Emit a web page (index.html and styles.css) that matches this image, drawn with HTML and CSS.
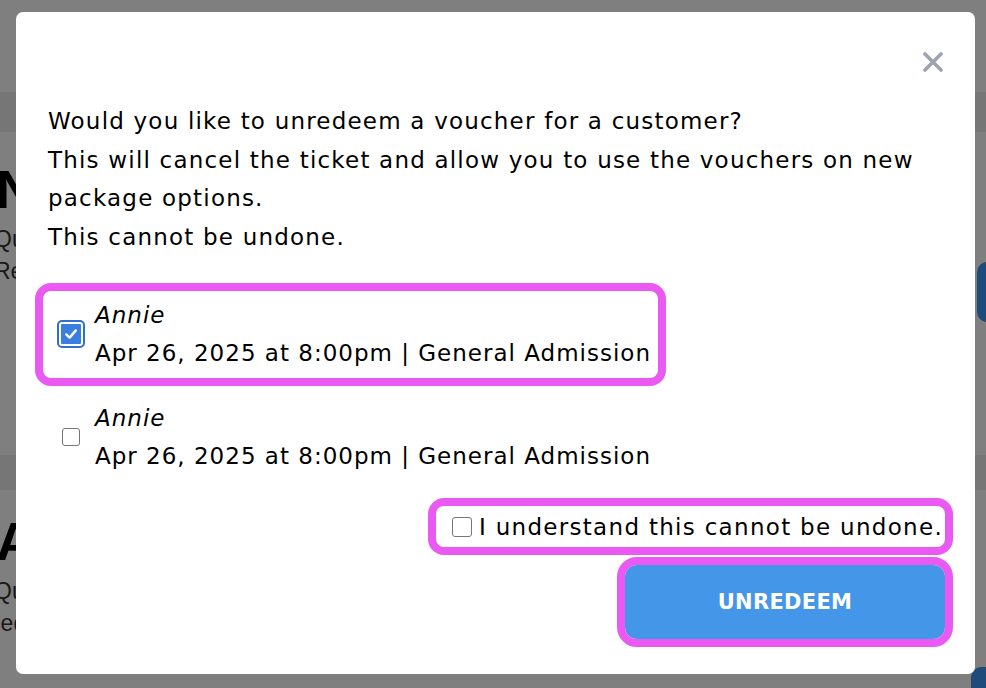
FILE: index.html
```html
<!DOCTYPE html>
<html lang="en">
<head>
    <meta charset="UTF-8">
    <meta name="viewport" content="width=device-width, initial-scale=1.0">
    <title>Unredeem Voucher</title>
    <link rel="stylesheet" href="styles.css">
</head>
<body>
    <div class="page">
        <div class="topbar"></div>
        <div class="card card-first">
            <div class="card-info">
                <h2>Nashville</h2>
                <p>Quantity: 2</p>
                <p>Redeemed: 2</p>
            </div>
            <div class="card-btn btn-one"></div>
        </div>
        <div class="card card-second">
            <div class="card-info">
                <h2>Annie</h2>
                <p>Quantity: 2</p>
                <p class="shift">Redeemed: 1</p>
            </div>
            <div class="card-btn btn-two"></div>
        </div>
    </div>

    <div class="overlay">
        <div class="modal">
            <div class="modal-head">
                <button class="close-btn" aria-label="Close">
                    <svg width="20" height="20" viewBox="0 0 20 20">
                        <path d="M2 2 L18 18 M18 2 L2 18" stroke="#9ca3af" stroke-width="3.6" stroke-linecap="round" fill="none"/>
                    </svg>
                </button>
            </div>

            <p class="intro">
                Would you like to unredeem a voucher for a customer?<br>
                This will cancel the ticket and allow you to use the vouchers on new package options.<br>
                This cannot be undone.
            </p>

            <div class="tickets">
                <label class="ticket focused">
                    <span class="check-wrap"><span class="check checked">
                        <svg width="16" height="16" viewBox="0 0 16 16"><path d="M3.2 8.4 L6.6 11.6 L12.8 4.4" stroke="#fff" stroke-width="2.4" fill="none" stroke-linecap="round" stroke-linejoin="round"/></svg>
                    </span></span>
                    <span class="ticket-text">
                        <em>Annie</em><br>
                        Apr 26, 2025 at 8:00pm | General Admission
                    </span>
                </label>
                <label class="ticket">
                    <span class="check-wrap"><span class="check"></span></span>
                    <span class="ticket-text">
                        <em>Annie</em><br>
                        Apr 26, 2025 at 8:00pm | General Admission
                    </span>
                </label>
            </div>

            <div class="confirm-row">
                <label class="confirm focused">
                    <span class="check small"></span>
                    I understand this cannot be undone.
                </label>
            </div>

            <div class="actions">
                <button class="unredeem focused">UNREDEEM</button>
            </div>
        </div>
    </div>
</body>
</html>
```

FILE: styles.css
```css
body { margin: 0; overflow: hidden; font-family: "DejaVu Sans", sans-serif; color: #000; background: #fff; }

.page { width: 1060px; margin-left: -4px; background: #ececec; }
.topbar { height: 92px; background: #fff; margin-bottom: 40px; }
.card { display: flex; background: #fff; padding: 0 20px 0 0; }
.card-first { height: 323px; margin-bottom: 35px; }
.card-second { height: 220px; }
.card-info { white-space: nowrap; }
.card-info h2 { font-family: "Liberation Sans", sans-serif; font-size: 54px; font-weight: bold; margin: 26px 0 0; line-height: 62px; }
.card-second .card-info h2 { margin-top: 20px; }
.card-info p { font-family: "Liberation Sans", sans-serif; font-size: 23px; color: #333; margin: 6px 0 0 -2px; line-height: 26px; }
.card-info p.shift { margin-left: -12px; }
.card-btn { margin-left: auto; background: #3e96f4; border-radius: 10px; height: 60px; }
.btn-one { width: 59px; margin-top: 130px; }
.btn-two { width: 65px; margin-top: 177px; }

.overlay { position: fixed; inset: 0; background: rgba(0, 0, 0, 0.5); }
.modal { width: 897px; margin: 12px 0 0 16px; padding: 40px 30px 35px 32px; background: #fff; border-radius: 7px; }

.modal-head { display: flex; justify-content: flex-end; height: 20px; }
.close-btn { border: 0; background: none; padding: 0; margin-right: 2px; width: 20px; height: 20px; cursor: pointer; }
.close-btn svg { display: block; }

.intro { font-size: 23px; letter-spacing: 1.2px; line-height: 38.5px; margin: 30px 0 0; }

.tickets { display: flex; flex-direction: column; gap: 16px; margin: 35px 0 0 -5px; align-items: flex-start; }
.ticket { display: flex; align-items: center; gap: 10px; padding: 5px 7px 6px 14px; border-radius: 8px; font-size: 23px; letter-spacing: 1px; line-height: 38px; }
.ticket em { font-style: italic; }
.check-wrap { width: 28px; display: flex; justify-content: center; }
.check { display: block; width: 16px; height: 16px; border: 1.5px solid #767676; border-radius: 3px; background: #fff; }
.check.checked { width: 20px; height: 20px; border: 2px solid #fff; background: #3a7fe0; border-radius: 3px; outline: 2.5px solid #2f6fd0; display: flex; align-items: center; justify-content: center; }
.check.checked svg { display: block; }

.focused { outline: 8px solid #ea59f1; }

.confirm-row { display: flex; justify-content: flex-end; margin-top: 25px; }
.confirm { display: flex; align-items: center; gap: 7px; padding: 2px 2px 1px 16px; border-radius: 8px; font-size: 23px; letter-spacing: 1.3px; line-height: 38px; }
.check.small { width: 18px; height: 18px; }

.actions { display: flex; justify-content: flex-end; margin-top: 18px; }
.unredeem { width: 320px; height: 74px; background: #4496e8; color: #fff; border: 0; border-radius: 12px; font-family: "DejaVu Sans", sans-serif; font-weight: bold; font-size: 21px; letter-spacing: 0.3px; }
```
